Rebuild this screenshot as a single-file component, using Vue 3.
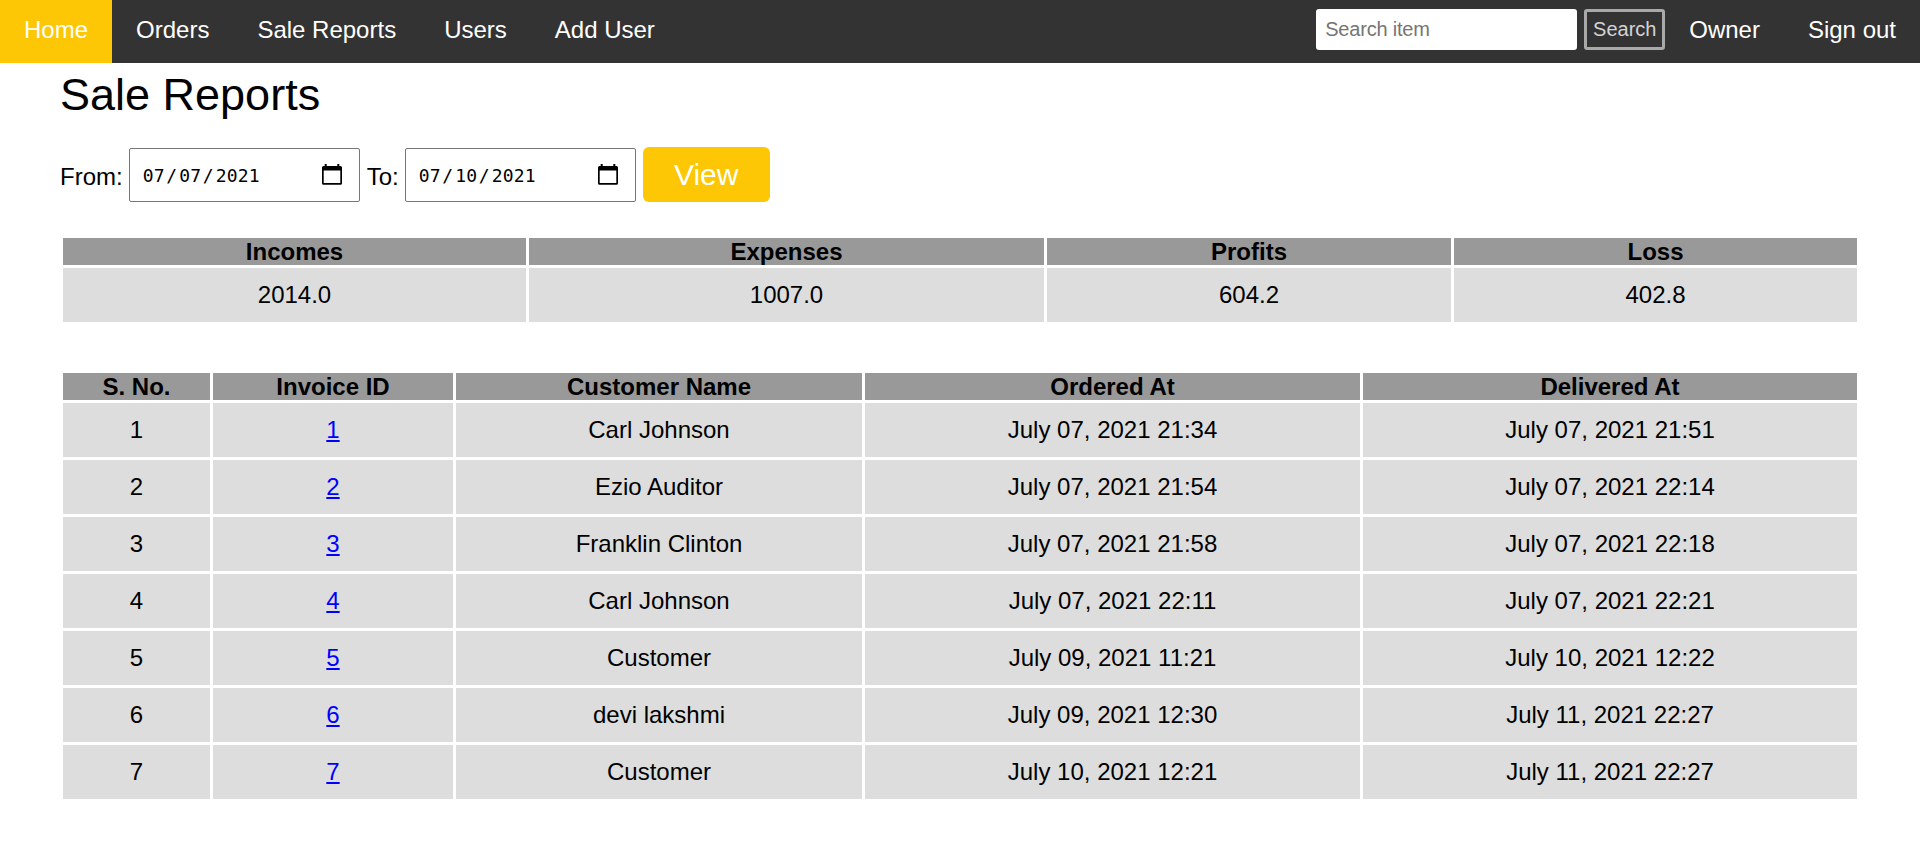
<script setup>
const navLinks = ['Home', 'Orders', 'Sale Reports', 'Users', 'Add User']

const dates = [
  { label: 'From:', parts: ['07', '07', '2021'] },
  { label: 'To:', parts: ['07', '10', '2021'] },
]

const summary = [
  { title: 'Incomes', value: '2014.0' },
  { title: 'Expenses', value: '1007.0' },
  { title: 'Profits', value: '604.2' },
  { title: 'Loss', value: '402.8' },
]

const columns = ['S. No.', 'Invoice ID', 'Customer Name', 'Ordered At', 'Delivered At']

const invoices = [
  { id: 1, customer: 'Carl Johnson', ordered: 'July 07, 2021 21:34', delivered: 'July 07, 2021 21:51' },
  { id: 2, customer: 'Ezio Auditor', ordered: 'July 07, 2021 21:54', delivered: 'July 07, 2021 22:14' },
  { id: 3, customer: 'Franklin Clinton', ordered: 'July 07, 2021 21:58', delivered: 'July 07, 2021 22:18' },
  { id: 4, customer: 'Carl Johnson', ordered: 'July 07, 2021 22:11', delivered: 'July 07, 2021 22:21' },
  { id: 5, customer: 'Customer', ordered: 'July 09, 2021 11:21', delivered: 'July 10, 2021 12:22' },
  { id: 6, customer: 'devi lakshmi', ordered: 'July 09, 2021 12:30', delivered: 'July 11, 2021 22:27' },
  { id: 7, customer: 'Customer', ordered: 'July 10, 2021 12:21', delivered: 'July 11, 2021 22:27' },
]
</script>

<template>
  <div class="page">
    <nav class="navbar">
      <a v-for="(link, i) in navLinks" :key="link" class="nav-link" :class="{ active: i === 0 }">{{ link }}</a>
      <form class="search" @submit.prevent>
        <input class="search-input" type="text" placeholder="Search item" />
        <button class="search-button" type="submit">Search</button>
      </form>
      <a class="nav-link">Owner</a>
      <a class="nav-link">Sign out</a>
    </nav>

    <main class="content">
      <h1 class="title">Sale Reports</h1>

      <div class="filters">
        <template v-for="date in dates" :key="date.label">
          <span class="filter-label">{{ date.label }}</span>
          <div class="date-field">
            <span class="date-value">
              <span>{{ date.parts[0] }}</span><span class="slash">/</span><span>{{ date.parts[1] }}</span><span class="slash">/</span><span>{{ date.parts[2] }}</span>
            </span>
            <svg class="calendar" width="20" height="21" viewBox="0 0 20 21">
              <path
                fill="#000"
                fill-rule="evenodd"
                d="M2.7 0h2v2h10.6V0h2v2H18.5a1.5 1.5 0 0 1 1.5 1.5v15.700a1.5 1.5 0 0 1-1.5 1.5h-17A1.5 1.5 0 0 1 0 19.200v-15.700A1.5 1.5 0 0 1 1.500 2h1.200zM1.700 6.400v12.700h16.600V6.400z"
              />
            </svg>
          </div>
        </template>
        <button class="view-button" type="button">View</button>
      </div>

      <table class="report summary">
        <colgroup>
          <col class="w-incomes" /><col class="w-expenses" /><col class="w-profits" /><col class="w-loss" />
        </colgroup>
        <thead>
          <tr><th v-for="item in summary" :key="item.title">{{ item.title }}</th></tr>
        </thead>
        <tbody>
          <tr><td v-for="item in summary" :key="item.title">{{ item.value }}</td></tr>
        </tbody>
      </table>

      <table class="report">
        <colgroup>
          <col class="w-number" /><col class="w-invoice" /><col class="w-customer" /><col class="w-ordered" /><col class="w-delivered" />
        </colgroup>
        <thead>
          <tr><th v-for="name in columns" :key="name">{{ name }}</th></tr>
        </thead>
        <tbody>
          <tr v-for="(row, i) in invoices" :key="row.id">
            <td>{{ i + 1 }}</td>
            <td><a class="invoice-link" href="#">{{ row.id }}</a></td>
            <td>{{ row.customer }}</td>
            <td>{{ row.ordered }}</td>
            <td>{{ row.delivered }}</td>
          </tr>
        </tbody>
      </table>
    </main>
  </div>
</template>

<style>
body {
  margin: 0;
  background: #fff;
}
</style>

<style scoped>
.page {
  font-family: "Liberation Sans", Arial, sans-serif;
  font-size: 24px;
  line-height: 27px;
  color: #000;
}

.navbar {
  display: flex;
  height: 63px;
  background: #333;
}

.nav-link {
  box-sizing: border-box;
  height: 63px;
  padding: 16px 24px 0;
  color: #fff;
  white-space: nowrap;
}

.nav-link.active {
  background: #fdc705;
}

.search {
  display: flex;
  gap: 7px;
  margin-left: auto;
  padding-top: 9px;
}

.search-input,
.search-button {
  box-sizing: border-box;
  height: 41px;
  margin: 0;
  font-family: inherit;
  font-size: 20px;
  border-radius: 3px;
}

.search-input {
  width: 261px;
  padding: 0 9px;
  border: 0;
  background: #fff;
  letter-spacing: -0.2px;
}

.search-input::placeholder {
  color: #757575;
  opacity: 1;
}

.search-button {
  width: 81px;
  padding: 0;
  border: 3px solid #a9a9a9;
  background: #333;
  color: #d3d3d3;
}

.content {
  padding: 0 60px;
}

.title {
  margin: 0;
  padding-top: 6px;
  font-size: 45px;
  font-weight: 400;
  line-height: 52px;
}

.filters {
  display: flex;
  align-items: flex-start;
  margin-top: 26px;
}

.filter-label {
  padding-top: 16px;
  margin-right: 6px;
}

.date-field {
  box-sizing: border-box;
  display: flex;
  align-items: center;
  justify-content: space-between;
  width: 231px;
  height: 54px;
  margin: 1px 7px 0 0;
  padding: 0 17px 0 13px;
  border: 1px solid #767676;
  border-radius: 2px;
}

.date-value {
  display: flex;
  font-family: "DejaVu Sans Mono", monospace;
  font-size: 18px;
  letter-spacing: 0.16px;
}

.slash {
  margin: 0 2px 0 1.5px;
}

.calendar {
  display: block;
  margin-bottom: 1px;
}

.view-button {
  width: 127px;
  height: 55px;
  margin: 0;
  padding: 0;
  border: 0;
  border-radius: 6px;
  background: #fdc705;
  color: #fff;
  font-family: inherit;
  font-size: 30px;
}

.report {
  width: 1800px;
  table-layout: fixed;
  border-collapse: separate;
  border-spacing: 3px;
  text-align: center;
}

.summary {
  margin: 33px 0 45px;
}

.report th {
  padding: 0;
  height: 27px;
  background: #999;
  font-weight: 700;
}

.report td {
  padding: 13px 0 14px;
  background: #ddd;
}

.invoice-link {
  color: #00f;
  text-decoration: underline;
  text-decoration-skip-ink: none;
}

.w-incomes { width: 463px; }
.w-expenses { width: 515px; }
.w-profits { width: 404px; }
.w-loss { width: 403px; }

.w-number { width: 147px; }
.w-invoice { width: 240px; }
.w-customer { width: 406px; }
.w-ordered { width: 495px; }
.w-delivered { width: 494px; }
</style>
